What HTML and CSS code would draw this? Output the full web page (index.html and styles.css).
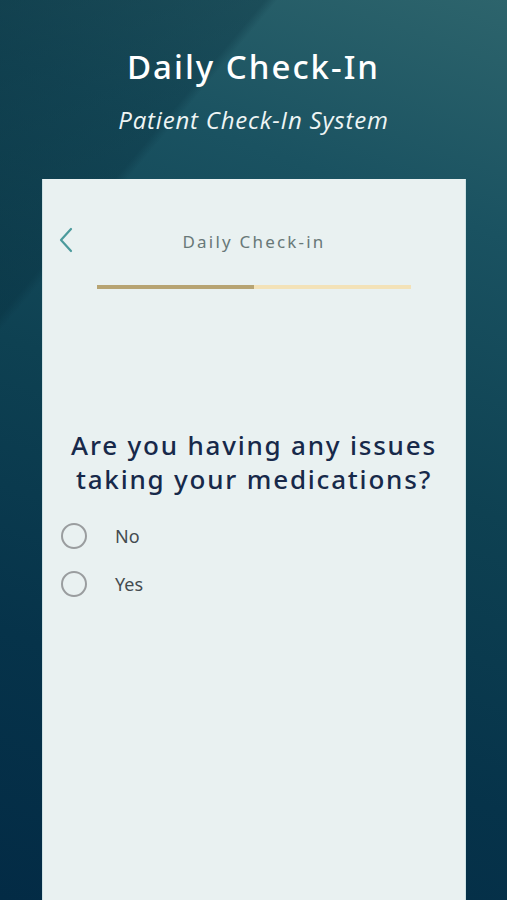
FILE: index.html
```html
<!DOCTYPE html>
<html lang="en">
<head>
    <meta charset="UTF-8">
    <meta name="viewport" content="width=device-width, initial-scale=1.0">
    <title>Daily Check-In</title>
    <link rel="stylesheet" href="styles.css">
</head>
<body>
    <div class="page">
        <header class="hero">
            <h1>Daily Check-In</h1>
            <p class="subtitle">Patient Check-In System</p>
        </header>
        <div class="card">
            <div class="top-bar">
                <button class="back" aria-label="Back">
                    <svg width="18" height="28" viewBox="0 0 18 28">
                        <polyline points="14,3 4,14 14,25" fill="none" stroke="#4b9a9c" stroke-width="2.2" stroke-linecap="round" stroke-linejoin="round"/>
                    </svg>
                </button>
                <span class="top-title">Daily Check-in</span>
            </div>
            <div class="progress">
                <div class="progress-fill" style="width: 50%"></div>
            </div>
            <div class="question">
                <h2>Are you having any issues taking your medications?</h2>
                <label class="option"><span class="radio"></span>No</label>
                <label class="option"><span class="radio"></span>Yes</label>
            </div>
        </div>
    </div>
</body>
</html>
```

FILE: styles.css
```css
html, body {
    margin: 0;
    height: 100%;
}

body {
    font-family: "Noto Sans", "Open Sans", sans-serif;
    background-color: #0a3a4c;
    background-image:
        linear-gradient(130deg, rgba(4,40,55,0.45) 0%, rgba(4,40,55,0.3) 21%, rgba(4,40,55,0) 22%),
        linear-gradient(200deg, #2d646c 0%, #1a5261 22%, #0e4152 48%, #06334a 75%, #032b45 100%);
    overflow: hidden;
}

.page {
    display: flex;
    flex-direction: column;
    height: 100%;
}

.hero {
    text-align: center;
    color: #ffffff;
    padding-top: 45px;
    height: 179px;
    box-sizing: border-box;
}

.hero h1 {
    margin: 0;
    font-size: 33px;
    font-weight: 500;
    letter-spacing: 2px;
    line-height: 44px;
}

.subtitle {
    margin: 16px 0 0;
    font-family: "Open Sans", sans-serif;
    font-style: italic;
    font-size: 24px;
    line-height: 30px;
    letter-spacing: 0.8px;
    color: #eef5f5;
}

.card {
    flex: 1;
    margin: 0 41px 0 42px;
    background-color: #e9f1f1;
    border-left: 1px solid #cfe2e4;
    border-right: 1px solid #cfe2e4;
}

.top-bar {
    position: relative;
    height: 48px;
    margin-top: 38px;
    display: flex;
    align-items: center;
    justify-content: center;
}

.back {
    position: absolute;
    left: 14px;
    top: 9px;
    background: none;
    border: none;
    padding: 0;
    cursor: pointer;
}

.top-title {
    font-size: 17px;
    color: #687878;
    letter-spacing: 2.2px;
}

.progress {
    margin: 20px 54px 0 54px;
    height: 4px;
    background-color: #f3e2b8;
}

.progress-fill {
    height: 100%;
    background-color: #b7a473;
}

.question {
    padding: 139px 18px 0;
}

.question h2 {
    margin: 0 0 16px;
    text-align: center;
    font-size: 26px;
    font-weight: 500;
    line-height: 34px;
    color: #17294a;
    letter-spacing: 1.8px;
}

.option {
    display: flex;
    align-items: center;
    height: 48px;
    font-size: 18px;
    color: #444b4f;
    cursor: pointer;
}

.radio {
    width: 22px;
    height: 22px;
    border: 2px solid #9a9d9f;
    border-radius: 50%;
    margin-right: 28px;
}
```
